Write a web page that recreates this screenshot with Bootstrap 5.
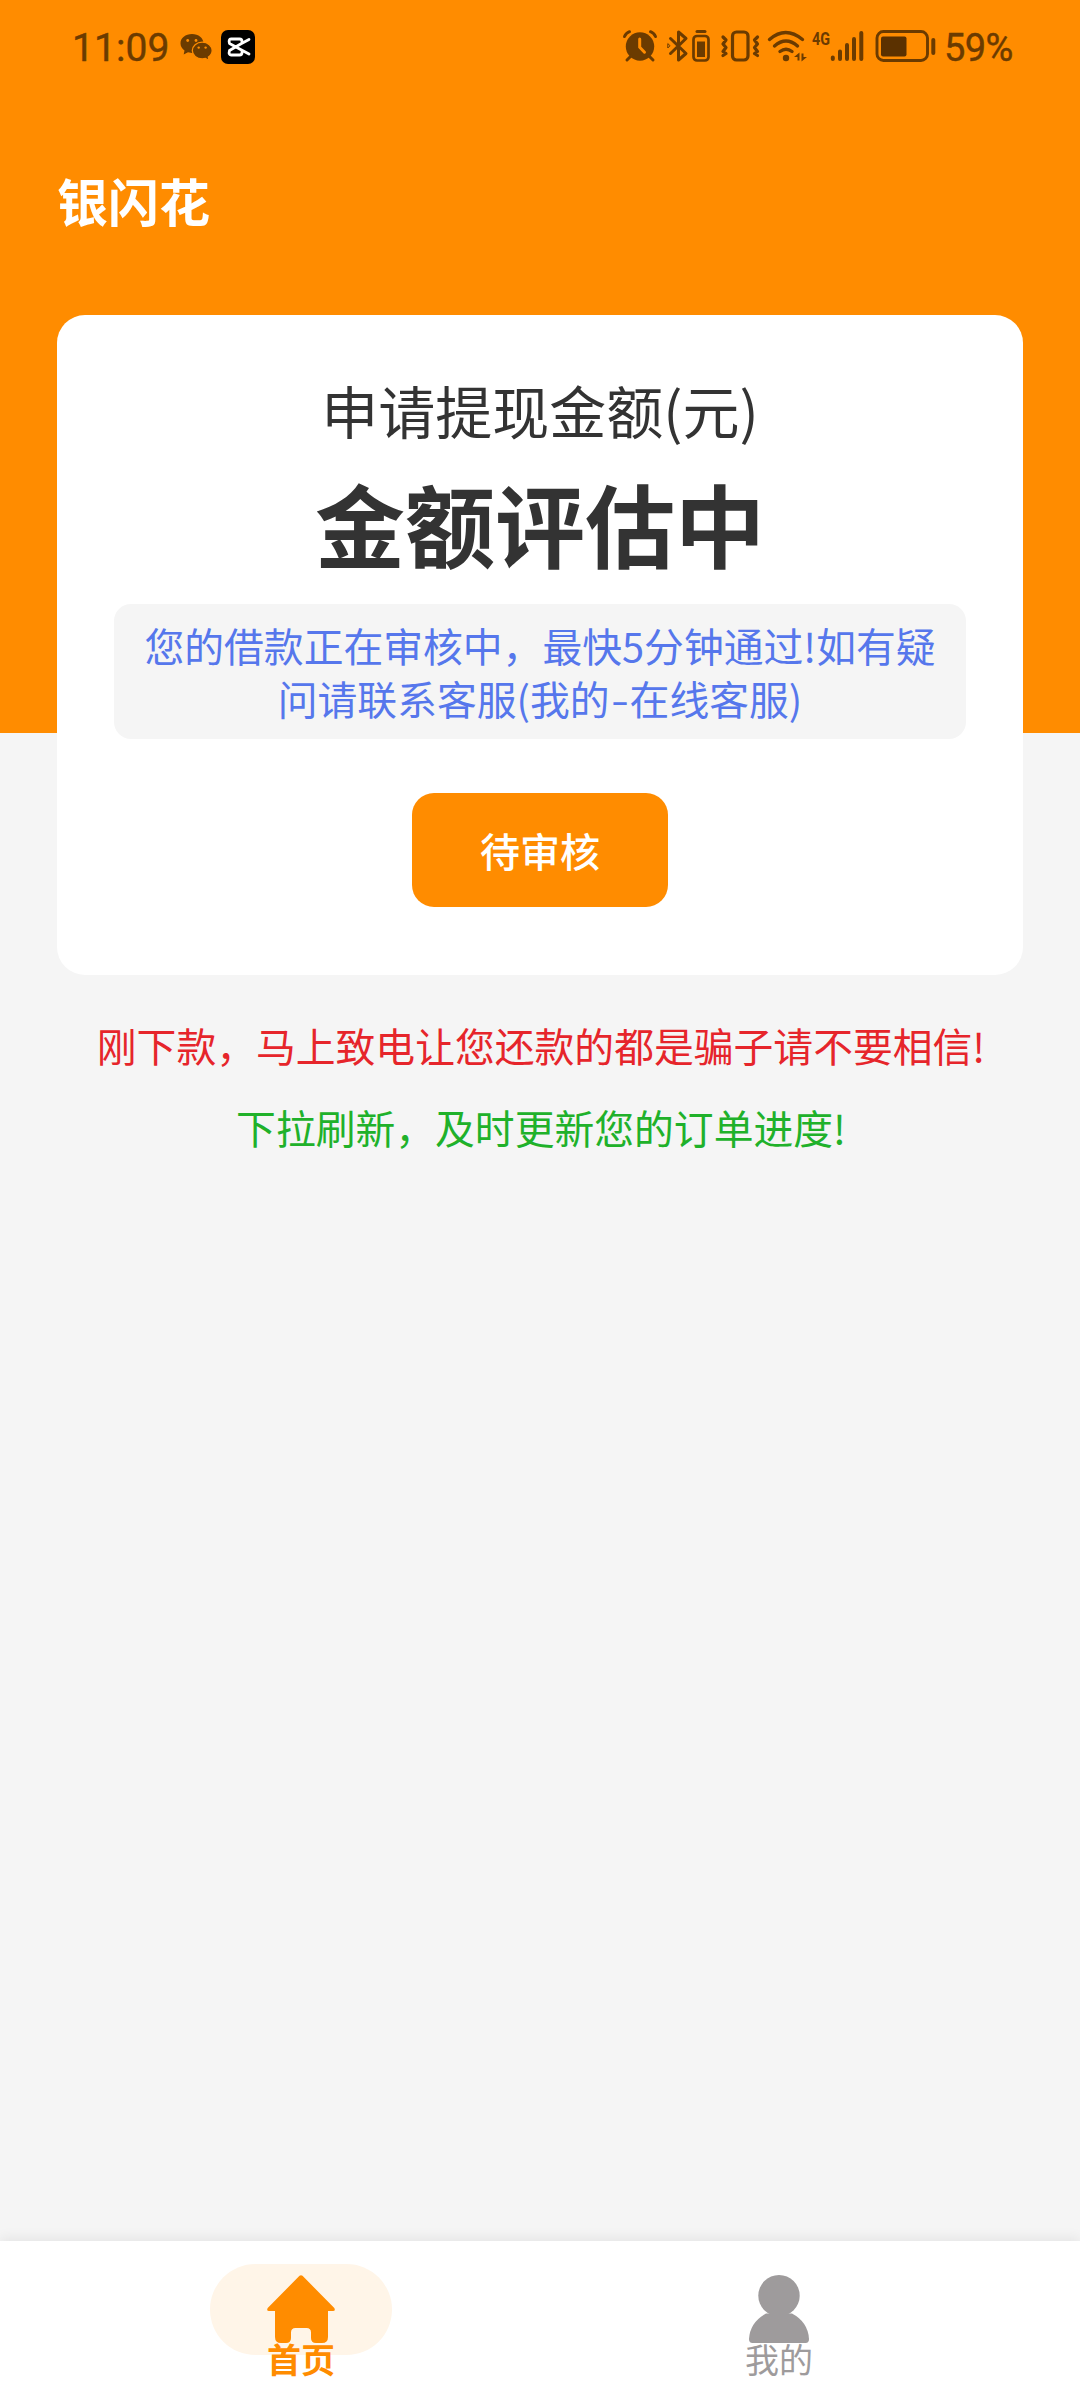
<!DOCTYPE html>
<html lang="zh-CN">
<head>
<meta charset="utf-8">
<meta name="viewport" content="width=device-width, initial-scale=1">
<title>银闪花</title>
<link href="https://cdn.jsdelivr.net/npm/bootstrap@5.3.0/dist/css/bootstrap.min.css" rel="stylesheet">
<style>
  body{font-family:"Noto Sans CJK SC",sans-serif;background:#f5f5f5;color:#333}
  .app-shell{height:2400px;width:1080px;overflow:hidden}
  .hero{background:#ff8c00;height:733px}
  .status-row{height:94px;padding:29px 66px 0 72px;color:#6b3b00;font-family:Roboto,sans-serif}
  .status-row svg{height:36px;display:block;flex:none;overflow:visible}
  .clock-text{font-size:39px;line-height:39px;width:109px;letter-spacing:.1px;-webkit-text-stroke:.4px #6b3b00}
  .pct-text{font-size:38px;line-height:39px;width:70px;margin-left:8px;letter-spacing:-.6px;white-space:nowrap;-webkit-text-stroke:.4px #6b3b00}
  .brand-name{font-size:51px;line-height:60px;font-weight:700;color:#fff;padding:76px 57px 0}
  .quota{margin:-418px 57px 0;height:660px;border-radius:28px;padding:56px 57px 0}
  .quota-label{font-size:57px;line-height:76px}
  .quota-value{font-size:90px;line-height:120px;font-weight:700;margin-top:15px}
  .notice{background:#f5f5f5;color:#5677ec;border-radius:17px;height:135px;margin-top:22px;padding:14px 25px;font-size:39.8px;line-height:53px}
  .notice-dash{display:inline-block;width:20px;transform:scaleX(1.3)}
  .btn-review{--bs-btn-bg:#ff8c00;--bs-btn-color:#fff;--bs-btn-hover-bg:#f08400;--bs-btn-hover-color:#fff;--bs-btn-font-size:40px;--bs-btn-font-weight:500;--bs-btn-border-width:0;width:256px;height:114px;border-radius:22px;margin-top:54px;padding:0 0 1px;line-height:1}
  .tip{font-size:39.8px;line-height:60px;padding-left:2px}
  .tip-red{color:#e6252b;margin-top:40px}
  .tip-green{color:#20b12a;margin-top:22px}
  .tabs{height:159px;padding:23px 62px 0;box-shadow:0 -3px 12px rgba(0,0,0,.07)}
  .tab-icon{width:182px;height:91px;border-radius:46px;padding-bottom:1px}
  .tab-on .tab-icon{background:#fff5e8}
  .tab-icon svg{width:68px;height:68px}
  .tab-label{font-size:34px;line-height:34px;margin-top:-13px;color:#9e9b9c}
  .tab-on .tab-label{color:#ff8c00;font-weight:700}
</style>
</head>
<body>
<div class="app-shell d-flex flex-column">
  <header class="hero flex-shrink-0">
    <div class="status-row d-flex align-items-start justify-content-between">
      <div class="d-flex">
        <span class="clock-text">11:09</span>
        <svg width="32" viewBox="181 29 32 36" fill="currentColor"><path d="M192 34c-6.500 0-11.500 4-11.500 9.200 0 3 1.500 5.500 4 7.200l-.8 4 4.300-2.200 4 .7c6.500 0 11.500-4.200 11.500-9.500S198.500 34 192 34z"/><path d="M202.300 42.200c-5.800 0-10 3.800-10 8.400s4.200 8.400 10 8.400l3.200-.5 3.600 2-.7-3.400c2.300-1.500 3.800-3.800 3.800-6.500 0-4.600-4.200-8.400-9.900-8.400z" stroke="#ff8c00" stroke-width="1.300"/><g fill="#ff8c00"><circle cx="187.700" cy="40.500" r="1.400"/><circle cx="196" cy="40.500" r="1.400"/><circle cx="198.700" cy="47.600" r="1.200"/><circle cx="205.600" cy="47.600" r="1.200"/></g></svg>
        <svg width="34" viewBox="221 29 34 36" style="margin-left:8px"><rect x="221" y="30" width="34" height="34" rx="7" fill="#000"/><path d="M249 39.500 241.500 43.500 229.500 50.500Q228.300 55 231 55h8.500q2.500 0 2.500-2.500v-1M249 54l-7.500-4-12-6.500Q228.300 39 231 39h8.500q2.500 0 2.500 2.500v1" fill="none" stroke="#fff" stroke-width="2.800" stroke-linecap="round" stroke-linejoin="round"/></svg>
      </div>
      <div class="d-flex">
        <svg width="34" viewBox="623 29 34 36"><circle cx="640" cy="46.500" r="14.200" fill="currentColor"/><path d="M624.500 36.500q1.500-3.500 5-4.800M655.500 36.500q-1.500-3.500-5-4.800M631 56l-4 4M649 56l4 4" stroke="currentColor" stroke-width="3" stroke-linecap="round" fill="none"/><path d="M639.700 39v8.200l4.800 5" stroke="#ff8c00" stroke-width="3" fill="none" stroke-linecap="round"/></svg>
        <svg width="45" viewBox="667 29 45 36" style="margin-left:10px" fill="none" stroke="currentColor" stroke-width="3" stroke-linejoin="round" stroke-linecap="round"><path d="m670.500 38.500 15.500 15-7.500 6.500V32l7.500 6.500-15.500 15"/><path d="M667.800 44v4l2-2z" stroke-width="1"/><rect x="693.500" y="36" width="15" height="24.500" rx="3.500" stroke-width="2.700"/><path d="M697 31.500h8"/><path d="M697 41.500h8V57h-8z" fill="currentColor" stroke="none"/></svg>
        <svg width="40" viewBox="720 29 40 36" style="margin-left:8px" fill="none" stroke="currentColor" stroke-width="3.200" stroke-linejoin="round" stroke-linecap="round"><rect x="732.500" y="32" width="15.500" height="28" rx="4"/><path d="m723 37 3 3-3 4 3 3.500-3 4 3 2-3 2M757.500 37l-3 3 3 4-3 3.500 3 4-3 2 3 2"/></svg>
        <svg width="40" viewBox="767 29 40 36" style="margin-left:7px" fill="none" stroke="currentColor" stroke-width="3.400" stroke-linecap="round"><path d="M769.500 39.500q16-14 33 0M774.500 46q11.500-10 23 0M780 51.500q6-4.500 12 0"/><circle cx="786" cy="58" r="3.200" fill="currentColor" stroke="none"/><path d="M799.500 52.500v8h-2v-3.500h-3.500zM801.500 61.500v-8h2v3.500h3.500z" fill="currentColor" stroke="none"/></svg>
        <svg width="19" viewBox="812 29 19 36" style="margin-left:4px"><text x="813" y="44.500" font-size="18" font-weight="700" fill="currentColor" textLength="18" lengthAdjust="spacingAndGlyphs">4G</text></svg>
        <svg width="34" viewBox="830 29 34 36" stroke="currentColor" stroke-width="4" stroke-linecap="round"><path d="M832.800 57.500v1.500M840 51.500V59M847 45v14M854 39v20M861.300 33v26"/></svg>
        <svg width="61" viewBox="875 29 61 36" style="margin-left:11px"><rect x="877" y="31.500" width="50.500" height="29" rx="6.500" fill="none" stroke="currentColor" stroke-width="2.900"/><rect x="881" y="36.500" width="25.500" height="20" rx="2" fill="#5b3100"/><path d="M933.300 40v13" stroke="currentColor" stroke-width="4" stroke-linecap="round"/></svg>
        <span class="pct-text">59%</span>
      </div>
    </div>
    <h1 class="brand-name m-0">银闪花</h1>
  </header>

  <main class="flex-grow-1">
    <section class="quota bg-white position-relative text-center">
      <div class="quota-label">申请提现金额(元)</div>
      <div class="quota-value">金额评估中</div>
      <div class="notice">您的借款正在审核中，最快5分钟通过!如有疑<br>问请联系客服(我的<span class="notice-dash">-</span>在线客服)</div>
      <button type="button" class="btn btn-review">待审核</button>
    </section>
    <p class="tip tip-red text-center mb-0">刚下款，马上致电让您还款的都是骗子请不要相信!</p>
    <p class="tip tip-green text-center mb-0">下拉刷新，及时更新您的订单进度!</p>
  </main>

  <nav class="tabs bg-white d-flex flex-shrink-0 position-relative">
    <a href="#" class="tab-on flex-fill w-50 d-flex flex-column align-items-center text-decoration-none">
      <span class="tab-icon d-flex align-items-center justify-content-center"><svg viewBox="0 0 68 68" fill="#ff8c00"><path d="M32.500.8q1.500-1.300 3 0L67.300 33q1.500 3-1.300 3h-5v26q0 6-6 6h-6q-5 0-5-5v-5.500q0-4.500-4.500-4.500h-11q-4.500 0-4.500 4.500V63q0 5-5 5h-5q-6 0-6-6V36H2q-2.800 0-1.300-3z"/></svg></span>
      <span class="tab-label">首页</span>
    </a>
    <a href="#" class="flex-fill w-50 d-flex flex-column align-items-center text-decoration-none">
      <span class="tab-icon d-flex align-items-center justify-content-center"><svg viewBox="0 0 68 68" fill="#9e9b9c"><circle cx="34" cy="20.700" r="20.700"/><path d="M21 38.500h26Q63 47 64 64q0 4-3.500 4h-53Q4 68 4 64 5 47 21 38.500z"/></svg></span>
      <span class="tab-label">我的</span>
    </a>
  </nav>
</div>
<script src="https://cdn.jsdelivr.net/npm/bootstrap@5.3.0/dist/js/bootstrap.bundle.min.js"></script>
</body>
</html>
